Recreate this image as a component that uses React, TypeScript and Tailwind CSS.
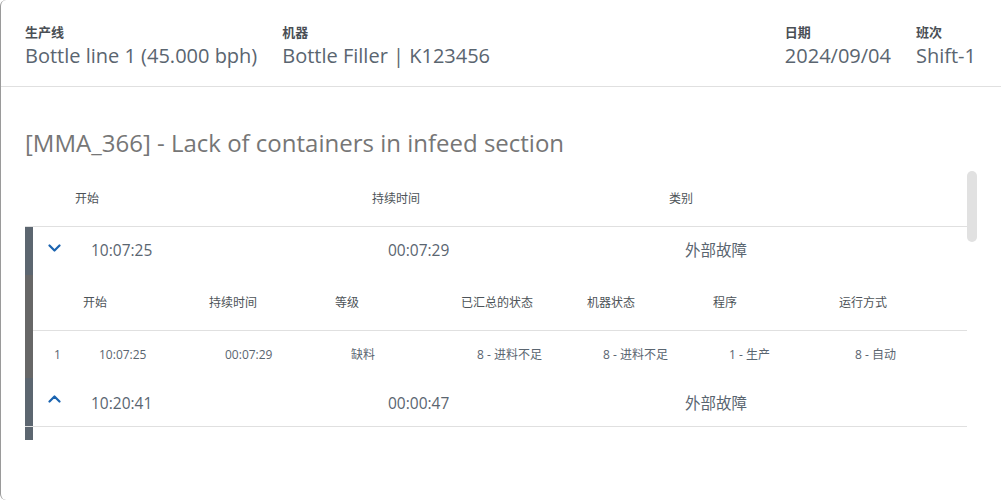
import { type ReactNode } from 'react'

const font = { fontFamily: '"Open Sans", "Noto Sans CJK SC", sans-serif' }

type Detail = {
  idx: string
  start: string
  duration: string
  level: string
  summary: string
  machine: string
  program: string
  mode: string
}

type Stop = {
  start: string
  duration: string
  category: string
  open: boolean
  details?: Detail[]
}

const stops: Stop[] = [
  {
    start: '10:07:25',
    duration: '00:07:29',
    category: '外部故障',
    open: true,
    details: [
      {
        idx: '1',
        start: '10:07:25',
        duration: '00:07:29',
        level: '缺料',
        summary: '8 - 进料不足',
        machine: '8 - 进料不足',
        program: '1 - 生产',
        mode: '8 - 自动',
      },
    ],
  },
  { start: '10:20:41', duration: '00:00:47', category: '外部故障', open: false },
]

function Chevron({ up }: { up?: boolean }) {
  return (
    <svg className="w-[13px] h-[8px] -translate-y-[3px]" viewBox="0 0 13 8" fill="none">
      <path
        d={up ? 'M1.5 6.5 L6.5 1.5 L11.5 6.5' : 'M1.5 1.5 L6.5 6.5 L11.5 1.5'}
        stroke="#1b64b0"
        strokeWidth={2.2}
        strokeLinecap="round"
        strokeLinejoin="round"
      />
    </svg>
  )
}

function InfoField({ label, value }: { label: string; value: ReactNode }) {
  return (
    <div className="flex flex-col">
      <span className="text-[13px] leading-[18px] font-bold text-[#4a4f55]">{label}</span>
      <span className="text-[20px] leading-[28px] mt-[1px] text-[#5a6570] whitespace-nowrap">{value}</span>
    </div>
  )
}

function DetailTable({ rows }: { rows: Detail[] }) {
  const heads = ['开始', '持续时间', '等级', '已汇总的状态', '机器状态', '程序', '运行方式']
  return (
    <div className="flex">
      <div className="w-[8px] bg-[#676767] shrink-0" />
      <div className="flex-1">
        <div className="grid grid-cols-[50px_repeat(7,126px)] h-[56px] items-center border-b border-[#e0e0e0] text-[12px] text-[#4d5358]">
          <span />
          {heads.map(h => (
            <span key={h}>{h}</span>
          ))}
        </div>
        {rows.map(r => (
          <div
            key={r.idx}
            className="grid grid-cols-[50px_repeat(7,126px)] h-[47px] items-center text-[12px] text-[#5a6570]"
          >
            <span className="pl-[21px]">{r.idx}</span>
            <span className="pl-4">{r.start}</span>
            <span className="pl-4">{r.duration}</span>
            <span className="pl-4">{r.level}</span>
            <span className="pl-4">{r.summary}</span>
            <span className="pl-4">{r.machine}</span>
            <span className="pl-4">{r.program}</span>
            <span className="pl-4">{r.mode}</span>
          </div>
        ))}
      </div>
    </div>
  )
}

function StopRow({ stop }: { stop: Stop }) {
  return (
    <div className={stop.open ? '' : 'border-b border-[#e0e0e0]'}>
      <div className="flex h-[48px]">
        <div className="w-[8px] bg-[#5c6670] shrink-0" />
        <div className="w-[42px] flex items-center justify-center">
          <Chevron up={!stop.open} />
        </div>
        <div
          className={`grid grid-cols-[297px_297px_297px] items-center text-[15.5px] text-[#5a6570] ${
            stop.open ? '' : 'pt-[3px]'
          }`}
        >
          <span className="pl-4">{stop.start}</span>
          <span className="pl-4">{stop.duration}</span>
          <span className="pl-4">{stop.category}</span>
        </div>
      </div>
      {stop.open && stop.details && <DetailTable rows={stop.details} />}
    </div>
  )
}

export default function App() {
  return (
    <div
      className="w-[1001px] h-[500px] bg-white border-l border-[#9a9a9a] rounded-l-[6px] overflow-hidden"
      style={font}
    >
      <div className="flex gap-[25px] pl-[24px] pr-[25px] pt-[23px] pb-[16px] border-b border-[#e0e0e0]">
        <InfoField label="生产线" value="Bottle line 1 (45.000 bph)" />
        <InfoField label="机器" value="Bottle Filler | K123456" />
        <div className="flex-1" />
        <InfoField label="日期" value="2024/09/04" />
        <InfoField label="班次" value="Shift-1" />
      </div>

      <h1 className="pl-[24px] mt-[40px] text-[24px] leading-[32px] text-[#767676]">
        [MMA_366] - Lack of containers in infeed section
      </h1>

      <div className="flex pl-[24px] mt-[12px] h-[269px]">
        <div className="w-[942px] overflow-hidden">
          <div className="grid grid-cols-[50px_297px_297px_297px] h-[56px] items-center border-b border-[#e0e0e0] text-[12px] text-[#4d5358]">
            <span />
            <span>开始</span>
            <span>持续时间</span>
            <span>类别</span>
          </div>
          {stops.map(s => (
            <StopRow key={s.start} stop={s} />
          ))}
          {/* next row, scrolled out of view */}
          <div className="flex h-[13px]">
            <div className="w-[8px] bg-[#5c6670]" />
          </div>
        </div>
        <div className="w-[10px]">
          <div className="h-[71px] rounded-full bg-[#e1e1e1]" />
        </div>
      </div>
    </div>
  )
}
